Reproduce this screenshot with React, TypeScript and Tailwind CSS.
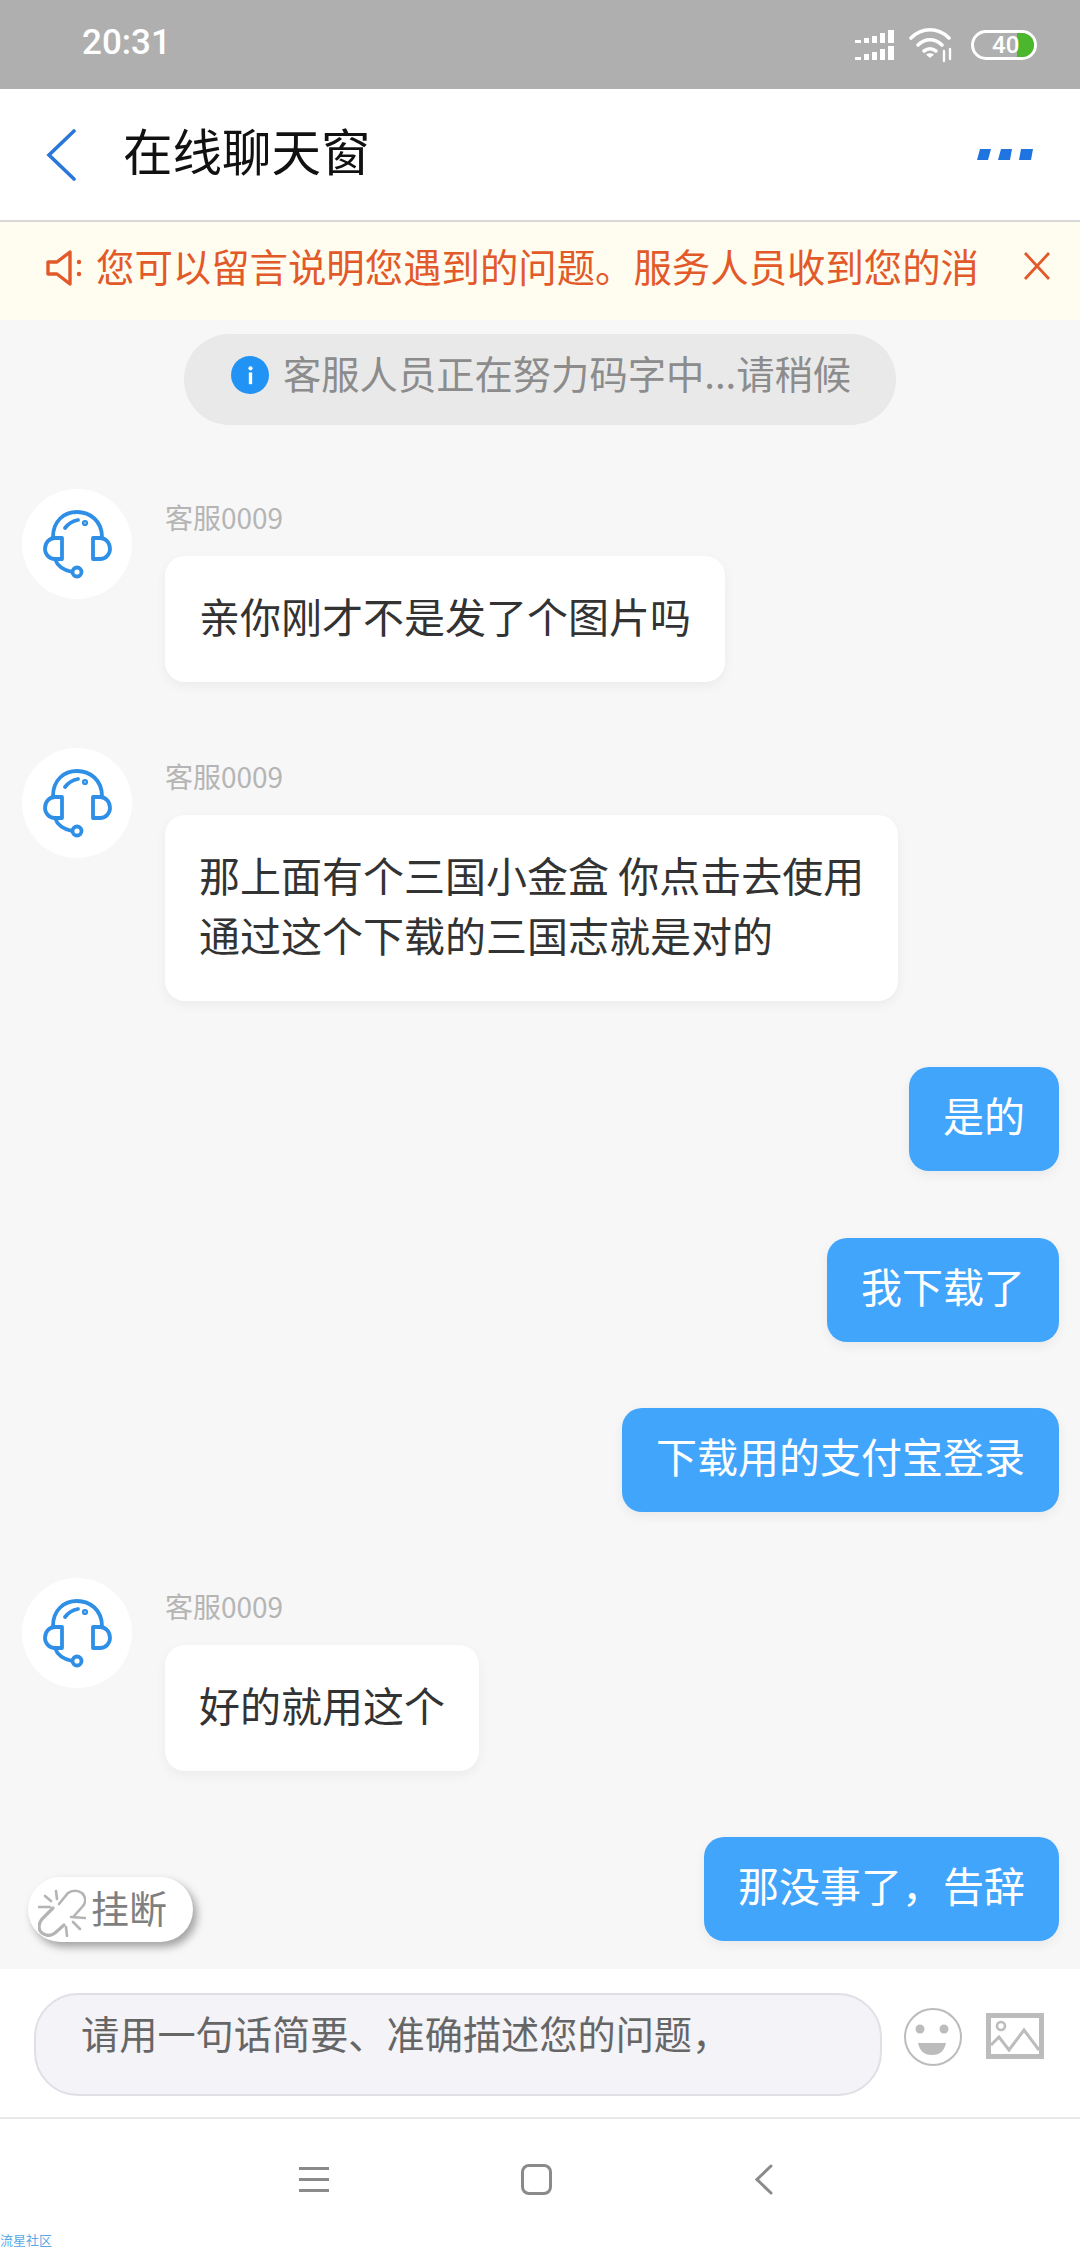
import React from 'react';

const Headset = () => (
  <svg viewBox="0 0 110 110" className="w-[110px] h-[110px]" fill="none" stroke="#2f8fe6" strokeWidth={3.8} strokeLinecap="round" strokeLinejoin="round">
    <path d="M31 48C31 32 42 23 55 23C68 23 80 32 80 48" />
    <path d="M43 39C46 35 50 32 56 31" />
    <circle cx="63" cy="34" r="1.2" />
    <path d="M40 49V70H33C27 70 23 65 23 60C23 54 27 49 33 49Z" />
    <path d="M71 49V70H78C84 70 88 65 88 60C88 54 84 49 78 49Z" />
    <path d="M33 70C35 76 41 81 50 83" />
    <circle cx="55" cy="83" r="4.5" />
  </svg>
);

const Agent = ({ lines, className }: { lines: string[]; className: string }) => (
  <div className={`flex items-start pl-[22px] ${className}`}>
    <div className="w-[110px] h-[110px] rounded-full bg-white shrink-0">
      <Headset />
    </div>
    <div className="ml-[33px]">
      <p className="text-[28px] leading-[36px] text-[#b5b5b5] mt-[10px]">客服0009</p>
      <div className="mt-[21px] w-fit rounded-[20px] bg-white px-[34px] pt-[29px] pb-[37px] text-[41px] leading-[60px] text-[#333] shadow-[0_4px_12px_rgba(0,0,0,0.05)]">
        {lines.map((line) => (
          <p key={line} className="whitespace-nowrap">{line}</p>
        ))}
      </div>
    </div>
  </div>
);

const Mine = ({ text, className }: { text: string; className: string }) => (
  <div className={`flex justify-end pr-[21px] ${className}`}>
    <div className="h-[104px] rounded-[20px] bg-[#42a5fc] px-[34px] text-[41px] leading-[94px] text-white shadow-[0_4px_12px_rgba(0,0,0,0.06)]">{text}</div>
  </div>
);

export default function App() {
  return (
    <div className="relative w-[1080px] h-[2248px] overflow-hidden bg-white flex flex-col font-['Noto_Sans_CJK_SC','Noto_Sans',sans-serif]">
      {/* status bar */}
      <div className="h-[89px] shrink-0 bg-[#afafaf] flex items-center pl-[82px] pr-[43px] text-white">
        <span className="font-['Roboto',sans-serif] text-[35px] font-medium mb-[2px]">20:31</span>
        <div className="ml-auto flex items-center">
          <svg viewBox="0 0 42 30" className="w-[42px] h-[30px]" fill="#fff">
            <path d="M0 10h6v3H0zM9 8h5v5H9zM17 6h5v7h-5zM25 3h5v10h-5zM33 0h6v13h-6zM0 27h6v3H0zM9 24h5v6H9zM17 22h5v8h-5zM25 19h5v11h-5zM33 16h6v14h-6z" />
          </svg>
          <svg viewBox="0 0 46 36" className="ml-[12px] w-[46px] h-[36px]" fill="none" stroke="#fff" strokeWidth={3.6} strokeLinecap="round">
            <path d="M2 11C13 0 29 0 40 11" />
            <path d="M9 18C16 11 26 11 33 18" />
            <path d="M15 24C19 21 23 21 27 24" />
            <path d="M21 31l-4-3.5c2.600-1.800 5.400-1.800 8 0z" fill="#fff" stroke="none" />
            <path d="M35 24v10M41 22v10" strokeWidth={2.400} />
          </svg>
          <div className="relative ml-[16px] w-[66px] h-[30px] rounded-full border-[3px] border-white overflow-hidden">
            <div className="absolute right-0 top-0 bottom-0 w-[17px] bg-[#4bb72c]" />
            <span className="absolute left-[18px] top-[-3px] font-['Roboto',sans-serif] text-[24px] leading-[30px] font-medium">40</span>
          </div>
        </div>
      </div>

      {/* header */}
      <div className="h-[133px] shrink-0 bg-white border-b-2 border-[#d8d8d8] flex items-center pl-[46px] pr-[47px]">
        <svg viewBox="0 0 30 52" className="w-[30px] h-[52px]" fill="none" stroke="#2b77d9" strokeWidth={3.6} strokeLinecap="round">
          <path d="M28 2L3 26L28 50" />
        </svg>
        <h1 className="ml-[47px] mb-[9px] text-[49.500px] leading-none text-[#111]">在线聊天窗</h1>
        <svg viewBox="0 0 56 11" className="ml-auto w-[56px] h-[11px]" fill="#1f74e0">
          <path d="M3 0h11l-3 11H0zM24 0h11l-2 11H21zM44 0h12l-2 11H42z" />
        </svg>
      </div>

      {/* notice */}
      <div className="h-[98px] shrink-0 bg-[#fffdf0] flex items-center pl-[46px] text-[#e2592a]">
        <svg viewBox="0 0 38 36" className="w-[38px] h-[36px] shrink-0 mb-[7px]" fill="none" stroke="#e2592a" strokeWidth={3.400} strokeLinejoin="round">
          <path d="M2 12H11L24 2V34L11 24H2Z" />
          <circle cx="33" cy="12" r="2.200" fill="#e2592a" stroke="none" />
          <circle cx="33" cy="24" r="2.200" fill="#e2592a" stroke="none" />
        </svg>
        <p className="ml-[12px] mb-[12px] w-[884px] whitespace-nowrap text-[38.400px] leading-none">您可以留言说明您遇到的问题。服务人员收到您的消</p>
        <svg viewBox="0 0 28 28" className="ml-[43px] mb-[10px] w-[28px] h-[28px]" fill="none" stroke="#e2592a" strokeWidth={2.800}>
          <path d="M2 1L26 27M26 1L2 27" />
        </svg>
      </div>

      {/* chat */}
      <div className="relative h-[1649px] shrink-0 bg-[#f7f7f7]">
        <div className="mt-[14px] mx-auto w-[712px] h-[91px] rounded-full bg-[#e9e9e9] flex items-center pl-[47px]">
          <div className="w-[38px] h-[38px] mb-[10px] rounded-full bg-[#2093f4] flex items-center justify-center">
            <svg viewBox="0 0 6 22" className="w-[5px] h-[20px]" fill="#fff">
              <circle cx="3" cy="3" r="2.500" />
              <rect x="1" y="8" width="4" height="14" />
            </svg>
          </div>
          <span className="ml-[14px] mb-[12px] text-[38.300px] leading-none text-[#8c8c8c] whitespace-nowrap">客服人员正在努力码字中...请稍候</span>
        </div>

        <Agent className="mt-[64px]" lines={['亲你刚才不是发了个图片吗']} />
        <Agent className="mt-[66px]" lines={['那上面有个三国小金盒 你点击去使用', '通过这个下载的三国志就是对的']} />
        <Mine className="mt-[66px]" text="是的" />
        <Mine className="mt-[67px]" text="我下载了" />
        <Mine className="mt-[66px]" text="下载用的支付宝登录" />
        <Agent className="mt-[66px]" lines={['好的就用这个']} />
        <Mine className="mt-[66px]" text={'那没事了\uFF0C告辞'} />

        <button className="absolute left-[28px] top-[1557px] w-[165px] h-[65px] rounded-full bg-white flex items-center pl-[10px] text-[38px] text-[#7f7f7f] shadow-[4px_5px_8px_rgba(0,0,0,0.35)]">
          <svg viewBox="0 0 48 48" className="w-[48px] h-[48px] shrink-0 mt-[7px]" fill="none" stroke="#b4b4b4" strokeWidth={2.600} strokeLinecap="round">
            <path d="M21 15L30 4C34 1 40 1 44 4C48 8 48 13 45 17L36 27" />
            <path d="M15 19L4 30C0 35 0 41 4 44C8 47 13 47 17 44L26 36" strokeWidth={3.200} />
            <path d="M7 7L13 12M18 2L19 10M1 18H12M33 28L47 29M35 33L42 40M28 38L29 47" />
          </svg>
          <span className="ml-[5px] mb-[5px] leading-none">挂断</span>
        </button>
      </div>

      {/* input bar */}
      <div className="h-[150px] shrink-0 bg-white border-b-2 border-[#e8e8e8] flex items-start pl-[34px]">
        <div className="mt-[24px] w-[848px] h-[103px] rounded-[44px] bg-[#f3f3f8] border-2 border-[#dfdfe5] pl-[45px] text-[38.200px] leading-[76px] text-[#666]">
          {'请用一句话简要、准确描述您的问题\uFF0C'}
        </div>
        <svg viewBox="0 0 58 58" className="ml-[22px] mt-[39px] w-[58px] h-[58px]" fill="none" stroke="#bcbcbc" strokeWidth={2}>
          <circle cx="29" cy="29" r="28" />
          <circle cx="16" cy="21" r="4.500" fill="#bcbcbc" stroke="none" />
          <circle cx="40" cy="21" r="4.500" fill="#bcbcbc" stroke="none" />
          <path d="M14 35H42C40 44 35 47 28 47C21 47 16 44 14 35Z" fill="#bcbcbc" stroke="none" />
        </svg>
        <svg viewBox="0 0 58 46" className="ml-[24px] mt-[44px] w-[58px] h-[46px]" fill="none" stroke="#bcbcbc" strokeWidth={5}>
          <rect x="2.500" y="2.500" width="53" height="41" />
          <circle cx="15" cy="13" r="4" strokeWidth={2.600} />
          <path d="M5 32L13 24L23 37L38 17L53 37" strokeWidth={3} />
        </svg>
      </div>

      {/* nav */}
      <div className="relative flex-1 bg-white">
        <div className="absolute left-[299px] top-[48px] w-[30px] flex flex-col gap-[8px]">
          <div className="h-[3px] bg-[#8a8a8a]" />
          <div className="h-[3px] bg-[#8a8a8a]" />
          <div className="h-[3px] bg-[#8a8a8a]" />
        </div>
        <div className="absolute left-[521px] top-[45px] w-[31px] h-[31px] rounded-[8px] border-[3px] border-[#8a8a8a]" />
        <svg viewBox="0 0 18 31" className="absolute left-[755px] top-[45px] w-[18px] h-[31px]" fill="none" stroke="#8a8a8a" strokeWidth={3} strokeLinecap="round">
          <path d="M16 2L2 15.500L16 29" />
        </svg>
        <span className="absolute left-0 bottom-0 text-[13px] leading-[16px] text-[#5aa9e6]">流星社区</span>
      </div>
    </div>
  );
}
